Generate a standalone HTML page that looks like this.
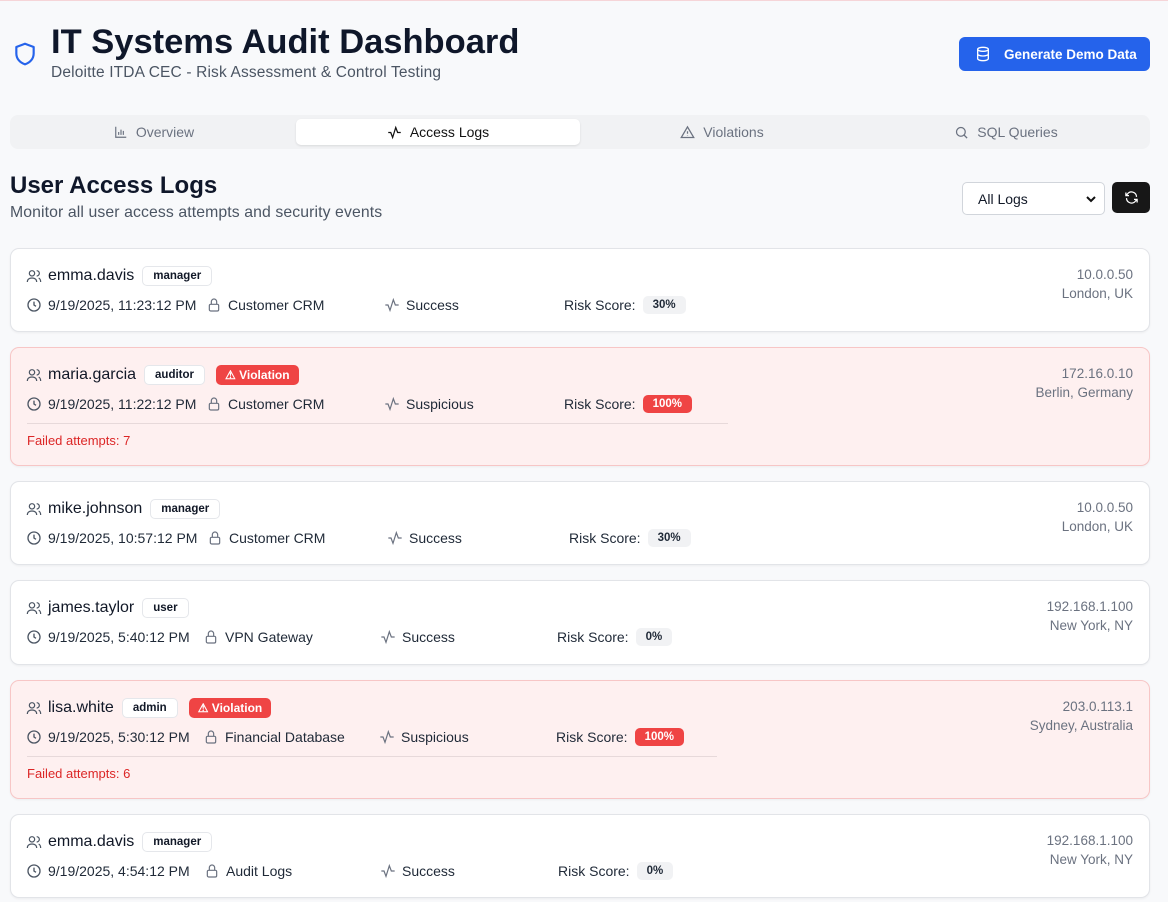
<!DOCTYPE html>
<html><head><meta charset="utf-8">
<style>
*{box-sizing:border-box;margin:0;padding:0}
body{width:1168px;height:902px;overflow:hidden;background:#f8f9fb;font-family:"Liberation Sans",sans-serif;color:#111827;position:relative}
.abs{position:absolute}
svg{display:block}
h1{position:absolute;left:51px;top:23px;font-size:34.5px;font-weight:700;color:#0f172a}
.sub{left:51px;top:64px;font-size:15.5px;color:#4b5563;letter-spacing:0.15px}
.btn{left:959px;top:37px;width:191px;height:34px;background:#2563eb;border-radius:6px;color:#fff;font-size:13.5px;font-weight:700;display:flex;align-items:center;padding-left:16px}
.tabs{left:10px;top:115px;width:1140px;height:34px;background:#f1f2f4;border-radius:8px}
.tab{position:absolute;top:4px;height:26px;width:284px;display:flex;align-items:center;justify-content:center;font-size:14px;color:#6b7280;gap:8px}
.tab.act{background:#fff;color:#111;border-radius:5px;box-shadow:0 1px 2px rgba(0,0,0,.1)}
h2{position:absolute;left:10px;top:172px;font-size:24px;font-weight:700;color:#0f172a}
.sub2{left:10px;top:204px;font-size:15.8px;color:#4b5563;letter-spacing:0.1px}
.sel{left:962px;top:182px;width:143px;height:33px;border:1px solid #d1d5db;border-radius:5px;background:#fff;font-size:14px;padding:8px 0 0 15px}
.ref{left:1112px;top:182px;width:38px;height:31px;background:#171717;border-radius:5px;display:flex;align-items:center;justify-content:center}
.card{position:absolute;left:10px;width:1140px;background:#fff;border:1px solid #e2e4e8;border-radius:9px;box-shadow:0 1px 2px rgba(0,0,0,.05)}
.card.v{background:#fef0f0;border-color:#f7c6c6}
.r1{position:absolute;left:15px;top:17px;display:flex;align-items:center;height:20px;font-size:16px;font-weight:500}
.r1 .u{margin-left:6px;margin-right:8px}
.badge{border:1px solid #e5e7eb;border-radius:5px;font-size:11.5px;font-weight:700;padding:2px 10px;background:#fff;height:20px;line-height:15px}
.viol{background:#ef4444;color:#fff;border-radius:5px;font-size:12px;font-weight:700;padding:2px 9px;margin-left:11px;height:20px;line-height:16px}
.r2{position:absolute;left:15px;top:46px;display:grid;font-size:14px;color:#1f2937;height:20px;align-items:center}
.c{display:flex;align-items:center;gap:6px}
.pill{background:#f1f2f4;border-radius:5px;font-size:11.5px;font-weight:700;padding:3px 10px;margin-left:1px}
.pill.red{background:#ef4444;color:#fff}
.right{position:absolute;right:16px;top:16px;text-align:right;font-size:13.5px;color:#6b7280;line-height:19px}
.hr{position:absolute;left:16px;top:75px;height:1px;background:#e7d9da}
.fail{position:absolute;left:16px;top:85px;font-size:13px;color:#dc2626}
</style></head><body>
<div class="abs" style="left:0;top:0;width:1168px;height:1px;background:#f6d5d8"></div>
<svg class="abs" style="left:12px;top:39px" width="26" height="30" viewBox="0 0 24 24" fill="none" stroke="#2563eb" stroke-width="2" stroke-linejoin="round"><path d="M12 2.5l8 3v6c0 5-3.5 8.5-8 10-4.5-1.5-8-5-8-10v-6z"/></svg>
<h1>IT Systems Audit Dashboard</h1>
<div class="abs sub">Deloitte ITDA CEC - Risk Assessment &amp; Control Testing</div>
<div class="abs btn"><svg width="16" height="16" viewBox="0 0 24 24" fill="none" stroke="#fff" stroke-width="2"><ellipse cx="12" cy="5" rx="8" ry="3"/><path d="M4 5v14c0 1.7 3.6 3 8 3s8-1.3 8-3V5M4 12c0 1.7 3.6 3 8 3s8-1.3 8-3"/></svg><span style="margin-left:13px">Generate Demo Data</span></div>
<div class="abs tabs">
<div class="tab" style="left:2px"><svg width="14" height="14" viewBox="0 0 24 24" fill="none" stroke="#6b7280" stroke-width="2"><path d="M3 3v18h18M8 17v-5M12 17V8M16 17v-7"/></svg>Overview</div>
<div class="tab act" style="left:286px"><svg width="15" height="15" viewBox="0 0 24 24" fill="none" stroke="#111" stroke-width="2"><path d="M2 12h4l3 8 5-16 3 8h5"/></svg>Access Logs</div>
<div class="tab" style="left:570px"><svg width="15" height="15" viewBox="0 0 24 24" fill="none" stroke="#6b7280" stroke-width="2"><path d="M12 3L2 20h20zM12 10v4M12 17v.5"/></svg>Violations</div>
<div class="tab" style="left:854px"><svg width="15" height="15" viewBox="0 0 24 24" fill="none" stroke="#6b7280" stroke-width="2"><circle cx="11" cy="11" r="7"/><path d="M21 21l-5-5"/></svg>SQL Queries</div>
</div>
<h2>User Access Logs</h2>
<div class="abs sub2">Monitor all user access attempts and security events</div>
<div class="abs sel">All Logs<svg class="abs" style="right:8px;top:12px" width="10" height="8" viewBox="0 0 10 8"><path d="M1 2l4 4 4-4" fill="none" stroke="#111" stroke-width="2"/></svg></div>
<div class="abs ref"><svg width="15" height="15" viewBox="0 0 24 24" fill="none" stroke="#fff" stroke-width="2"><path d="M20 11a8 8 0 0 0-14.5-4.5L3 9M3 4v5h5M4 13a8 8 0 0 0 14.5 4.5L21 15M21 20v-5h-5"/></svg></div>

<div class="card" style="top:248px;height:84px">
<div class="r1"><svg width="16" height="16" viewBox="0 0 24 24" fill="none" stroke="#4b5563" stroke-width="1.8"><circle cx="9" cy="8" r="4"/><path d="M2 21c0-4 3-6 7-6s7 2 7 6M16 4a4 4 0 0 1 0 8M19 15c2 1 3 3 3 6"/></svg><span class="u">emma.davis</span><span class="badge">manager</span></div>
<div class="r2" style="grid-template-columns:180px 178px 180px auto"><div class="c"><svg width="16" height="16" viewBox="0 0 24 24" fill="none" stroke="#4b5563" stroke-width="2"><circle cx="12" cy="12" r="9"/><path d="M12 7v5l3 2"/></svg>9/19/2025, 11:23:12 PM</div><div class="c"><svg width="16" height="16" viewBox="0 0 24 24" fill="none" stroke="#6b7280" stroke-width="1.8"><rect x="5" y="11" width="14" height="10" rx="2"/><path d="M8 11V7a4 4 0 0 1 8 0v4"/></svg>Customer CRM</div><div class="c"><svg width="16" height="16" viewBox="0 0 24 24" fill="none" stroke="#6b7280" stroke-width="1.8"><path d="M2 12h4l3 8 5-16 3 8h5"/></svg>Success</div><div class="c">Risk Score: <span class="pill">30%</span></div></div>
<div class="right">10.0.0.50<br>London, UK</div>
</div>

<div class="card v" style="top:347px;height:119px">
<div class="r1"><svg width="16" height="16" viewBox="0 0 24 24" fill="none" stroke="#4b5563" stroke-width="1.8"><circle cx="9" cy="8" r="4"/><path d="M2 21c0-4 3-6 7-6s7 2 7 6M16 4a4 4 0 0 1 0 8M19 15c2 1 3 3 3 6"/></svg><span class="u">maria.garcia</span><span class="badge">auditor</span><span class="viol">⚠ Violation</span></div>
<div class="r2" style="grid-template-columns:180px 178px 180px auto"><div class="c"><svg width="16" height="16" viewBox="0 0 24 24" fill="none" stroke="#4b5563" stroke-width="2"><circle cx="12" cy="12" r="9"/><path d="M12 7v5l3 2"/></svg>9/19/2025, 11:22:12 PM</div><div class="c"><svg width="16" height="16" viewBox="0 0 24 24" fill="none" stroke="#6b7280" stroke-width="1.8"><rect x="5" y="11" width="14" height="10" rx="2"/><path d="M8 11V7a4 4 0 0 1 8 0v4"/></svg>Customer CRM</div><div class="c"><svg width="16" height="16" viewBox="0 0 24 24" fill="none" stroke="#6b7280" stroke-width="1.8"><path d="M2 12h4l3 8 5-16 3 8h5"/></svg>Suspicious</div><div class="c">Risk Score: <span class="pill red">100%</span></div></div>
<div class="hr" style="width:701px"></div><div class="fail">Failed attempts: 7</div>
<div class="right">172.16.0.10<br>Berlin, Germany</div>
</div>

<div class="card" style="top:481px;height:84px">
<div class="r1"><svg width="16" height="16" viewBox="0 0 24 24" fill="none" stroke="#4b5563" stroke-width="1.8"><circle cx="9" cy="8" r="4"/><path d="M2 21c0-4 3-6 7-6s7 2 7 6M16 4a4 4 0 0 1 0 8M19 15c2 1 3 3 3 6"/></svg><span class="u">mike.johnson</span><span class="badge">manager</span></div>
<div class="r2" style="grid-template-columns:181px 180px 182px auto"><div class="c"><svg width="16" height="16" viewBox="0 0 24 24" fill="none" stroke="#4b5563" stroke-width="2"><circle cx="12" cy="12" r="9"/><path d="M12 7v5l3 2"/></svg>9/19/2025, 10:57:12 PM</div><div class="c"><svg width="16" height="16" viewBox="0 0 24 24" fill="none" stroke="#6b7280" stroke-width="1.8"><rect x="5" y="11" width="14" height="10" rx="2"/><path d="M8 11V7a4 4 0 0 1 8 0v4"/></svg>Customer CRM</div><div class="c"><svg width="16" height="16" viewBox="0 0 24 24" fill="none" stroke="#6b7280" stroke-width="1.8"><path d="M2 12h4l3 8 5-16 3 8h5"/></svg>Success</div><div class="c">Risk Score: <span class="pill">30%</span></div></div>
<div class="right">10.0.0.50<br>London, UK</div>
</div>

<div class="card" style="top:580px;height:85px">
<div class="r1"><svg width="16" height="16" viewBox="0 0 24 24" fill="none" stroke="#4b5563" stroke-width="1.8"><circle cx="9" cy="8" r="4"/><path d="M2 21c0-4 3-6 7-6s7 2 7 6M16 4a4 4 0 0 1 0 8M19 15c2 1 3 3 3 6"/></svg><span class="u">james.taylor</span><span class="badge">user</span></div>
<div class="r2" style="grid-template-columns:177px 177px 177px auto"><div class="c"><svg width="16" height="16" viewBox="0 0 24 24" fill="none" stroke="#4b5563" stroke-width="2"><circle cx="12" cy="12" r="9"/><path d="M12 7v5l3 2"/></svg>9/19/2025, 5:40:12 PM</div><div class="c"><svg width="16" height="16" viewBox="0 0 24 24" fill="none" stroke="#6b7280" stroke-width="1.8"><rect x="5" y="11" width="14" height="10" rx="2"/><path d="M8 11V7a4 4 0 0 1 8 0v4"/></svg>VPN Gateway</div><div class="c"><svg width="16" height="16" viewBox="0 0 24 24" fill="none" stroke="#6b7280" stroke-width="1.8"><path d="M2 12h4l3 8 5-16 3 8h5"/></svg>Success</div><div class="c">Risk Score: <span class="pill">0%</span></div></div>
<div class="right">192.168.1.100<br>New York, NY</div>
</div>

<div class="card v" style="top:680px;height:119px">
<div class="r1"><svg width="16" height="16" viewBox="0 0 24 24" fill="none" stroke="#4b5563" stroke-width="1.8"><circle cx="9" cy="8" r="4"/><path d="M2 21c0-4 3-6 7-6s7 2 7 6M16 4a4 4 0 0 1 0 8M19 15c2 1 3 3 3 6"/></svg><span class="u">lisa.white</span><span class="badge">admin</span><span class="viol">⚠ Violation</span></div>
<div class="r2" style="grid-template-columns:177px 176px 177px auto"><div class="c"><svg width="16" height="16" viewBox="0 0 24 24" fill="none" stroke="#4b5563" stroke-width="2"><circle cx="12" cy="12" r="9"/><path d="M12 7v5l3 2"/></svg>9/19/2025, 5:30:12 PM</div><div class="c"><svg width="16" height="16" viewBox="0 0 24 24" fill="none" stroke="#6b7280" stroke-width="1.8"><rect x="5" y="11" width="14" height="10" rx="2"/><path d="M8 11V7a4 4 0 0 1 8 0v4"/></svg>Financial Database</div><div class="c"><svg width="16" height="16" viewBox="0 0 24 24" fill="none" stroke="#6b7280" stroke-width="1.8"><path d="M2 12h4l3 8 5-16 3 8h5"/></svg>Suspicious</div><div class="c">Risk Score: <span class="pill red">100%</span></div></div>
<div class="hr" style="width:690px"></div><div class="fail">Failed attempts: 6</div>
<div class="right">203.0.113.1<br>Sydney, Australia</div>
</div>

<div class="card" style="top:814px;height:84px">
<div class="r1"><svg width="16" height="16" viewBox="0 0 24 24" fill="none" stroke="#4b5563" stroke-width="1.8"><circle cx="9" cy="8" r="4"/><path d="M2 21c0-4 3-6 7-6s7 2 7 6M16 4a4 4 0 0 1 0 8M19 15c2 1 3 3 3 6"/></svg><span class="u">emma.davis</span><span class="badge">manager</span></div>
<div class="r2" style="grid-template-columns:178px 176px 178px auto"><div class="c"><svg width="16" height="16" viewBox="0 0 24 24" fill="none" stroke="#4b5563" stroke-width="2"><circle cx="12" cy="12" r="9"/><path d="M12 7v5l3 2"/></svg>9/19/2025, 4:54:12 PM</div><div class="c"><svg width="16" height="16" viewBox="0 0 24 24" fill="none" stroke="#6b7280" stroke-width="1.8"><rect x="5" y="11" width="14" height="10" rx="2"/><path d="M8 11V7a4 4 0 0 1 8 0v4"/></svg>Audit Logs</div><div class="c"><svg width="16" height="16" viewBox="0 0 24 24" fill="none" stroke="#6b7280" stroke-width="1.8"><path d="M2 12h4l3 8 5-16 3 8h5"/></svg>Success</div><div class="c">Risk Score: <span class="pill">0%</span></div></div>
<div class="right">192.168.1.100<br>New York, NY</div>
</div>
</body></html>
